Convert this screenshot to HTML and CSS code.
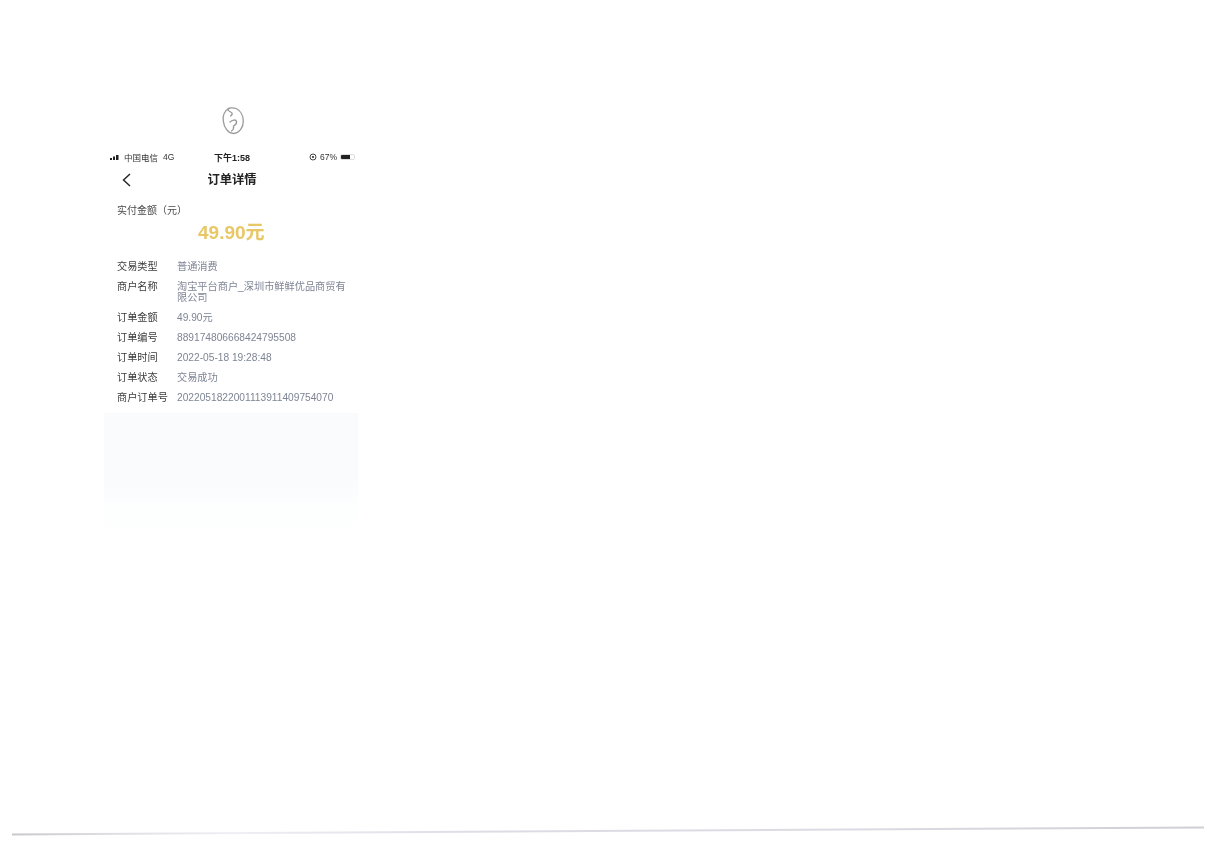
FILE: index.html
```html
<!DOCTYPE html>
<html lang="zh-CN">
<head>
  <meta charset="UTF-8" />
  <meta name="viewport" content="width=device-width, initial-scale=1" />
  <title>订单详情</title>
  <link rel="stylesheet" href="styles.css">
</head>
<body>
  <div class="phone">
    <div class="signature">
      <svg width="24" height="30" viewBox="0 0 24 30" fill="none" stroke="#999" stroke-width="1.300" stroke-linecap="round">
        <path d="M8 3C3.500 6 1.500 11 2.300 16C3 23 7.500 28.500 12.500 28.500C18.500 28 22.500 22 22.300 16C22 10 19 5 15 3.500C12 2.500 8 2.500 7 4.500C6.500 6 10 6.500 11 8C11.500 9 11 10 9.500 11" />
        <path d="M9 17C11 15 15 14 15.500 16.500C16 19.500 14 20 12.500 21C13 23 12 25 10.500 26" />
      </svg>
    </div>

    <div class="status-bar">
      <div class="status-left">
        <svg class="signal" width="9" height="5" viewBox="0 0 9 5" fill="#222">
          <rect x="0" y="3" width="2" height="2" />
          <rect x="3" y="1.500" width="2" height="3.500" />
          <rect x="6" y="0" width="2.500" height="5" />
        </svg>
        <span>中国电信</span>
        <span>4G</span>
      </div>
      <div class="status-time">下午1:58</div>
      <div class="status-right">
        <svg width="8" height="8" viewBox="0 0 8 8" fill="none" stroke="#333" stroke-width="0.900">
          <circle cx="4" cy="4" r="3" />
          <circle cx="4" cy="4" r="1.100" fill="#333" stroke="none" />
        </svg>
        <span>67%</span>
        <div class="battery"><div class="battery-level"></div></div>
      </div>
    </div>

    <div class="nav-bar">
      <svg class="back" width="9" height="14" viewBox="0 0 9 14" fill="none" stroke="#222" stroke-width="1.400">
        <path d="M8 1L1.500 7L8 13" />
      </svg>
      <h1 class="nav-title">订单详情</h1>
    </div>

    <div class="paid-label">实付金额（元）</div>
    <div class="paid-amount">49.90元</div>

    <div class="details">
      <div class="detail-label">交易类型</div>
      <div class="detail-value">普通消费</div>
      <div class="detail-label">商户名称</div>
      <div class="detail-value">淘宝平台商户_深圳市鲜鲜优品商贸有限公司</div>
      <div class="detail-label">订单金额</div>
      <div class="detail-value">49.90元</div>
      <div class="detail-label">订单编号</div>
      <div class="detail-value">889174806668424795508</div>
      <div class="detail-label">订单时间</div>
      <div class="detail-value">2022-05-18 19:28:48</div>
      <div class="detail-label">订单状态</div>
      <div class="detail-value">交易成功</div>
      <div class="detail-label">商户订单号</div>
      <div class="detail-value">2022051822001113911409754070</div>
    </div>

    <div class="scan-fade"></div>
  </div>

  <svg class="scan-edge" width="1216" height="860" viewBox="0 0 1216 860" fill="none">
    <defs>
      <linearGradient id="edgeShade" gradientUnits="userSpaceOnUse" x1="12" y1="0" x2="1204" y2="0">
        <stop offset="0" stop-color="#c8c7cd" />
        <stop offset="0.080" stop-color="#dedde3" />
        <stop offset="0.180" stop-color="#efeff4" />
        <stop offset="0.400" stop-color="#dddce4" />
        <stop offset="0.700" stop-color="#dcdbe3" />
        <stop offset="1" stop-color="#cfcfd6" />
      </linearGradient>
    </defs>
    <path d="M12 834.500L1204 827.500" stroke="url(#edgeShade)" stroke-width="2" />
  </svg>
</body>
</html>
```

FILE: styles.css
```css
* { box-sizing: border-box; }
body {
  margin: 0;
  height: 860px;
  overflow: hidden;
  background-color: #fff;
  font-family: 'Liberation Sans', 'Noto Sans CJK SC', sans-serif;
  color: #333;
  position: relative;
}
.phone {
  width: 254px;
  margin-left: 104px;
  padding-top: 105px;
  filter: blur(0.45px);
}
.signature {
  display: flex;
  justify-content: center;
  height: 30px;
  margin-left: 4px;
}
.status-bar {
  display: flex;
  align-items: center;
  justify-content: space-between;
  height: 14px;
  margin-top: 15px;
  padding: 0 3px 0 6px;
  font-size: 8.500px;
  color: #333;
}
.status-left, .status-right {
  display: flex;
  align-items: center;
  width: 76px;
}
.status-left { gap: 5px; }
.status-right {
  gap: 3px;
  justify-content: flex-end;
}
.status-time {
  font-size: 9px;
  font-weight: bold;
  color: #222;
  margin-left: -1px;
}
.battery {
  width: 15px;
  height: 6px;
  border: 0.500px solid #ddd;
  border-radius: 2px;
  overflow: hidden;
}
.battery-level {
  width: 67%;
  height: 100%;
  background-color: #222;
}
.nav-bar {
  display: flex;
  align-items: center;
  justify-content: center;
  height: 28px;
  margin-top: 1px;
  position: relative;
}
.back {
  position: absolute;
  left: 18px;
  top: 8px;
}
.nav-title {
  margin: 0 0 0 2px;
  font-size: 12.300px;
  font-weight: bold;
  color: #222;
}
.paid-label {
  margin-top: 11px;
  padding-left: 13px;
  font-size: 10px;
  line-height: 14px;
  color: #4a4a4a;
}
.paid-amount {
  margin-top: 3px;
  padding-left: 94px;
  font-size: 19px;
  line-height: 24px;
  font-weight: bold;
  color: #e8c766;
}
.details {
  display: grid;
  grid-template-columns: 60px 172px;
  row-gap: 9px;
  margin-top: 16px;
  padding-left: 13px;
  font-size: 10.200px;
  line-height: 11px;
}
.detail-label { color: #3c3c3c; }
.detail-value {
  color: #7d8494;
  word-break: break-all;
}
.scan-fade {
  height: 125px;
  margin-top: 10px;
  background: linear-gradient(to bottom, #fafbfd 0%, #f9fbfd 55%, #fdfefe 75%, #fff 100%);
}
.scan-edge {
  position: absolute;
  left: 0;
  top: 0;
  pointer-events: none;
}
```
